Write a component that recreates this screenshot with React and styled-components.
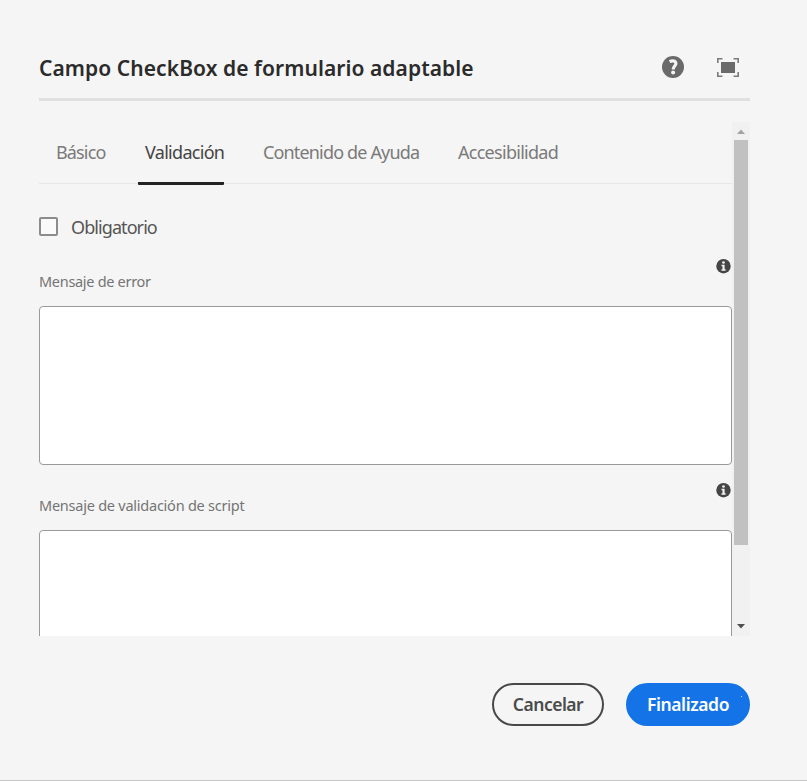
import React from 'react';
import styled, { createGlobalStyle } from 'styled-components';

const GlobalStyle = createGlobalStyle`
  * { box-sizing: border-box; }
  body { margin: 0; background: #f5f5f5; font-family: "Noto Sans", "Open Sans", sans-serif; }
`;

const Dialog = styled.main`
  display: flex;
  flex-direction: column;
  width: 807px;
  height: 781px;
  padding: 36px 57px 0 39px;
  background: #f5f5f5;
  border-bottom: 1px solid #c6c6c6;
  overflow: hidden;
`;

const Header = styled.header`
  display: flex;
  align-items: center;
  height: 65px;
  flex: none;
  border-bottom: 3px solid #e0e0e0;
`;

const Title = styled.h1`
  margin: 0 auto 0 0;
  padding-top: 2px;
  font-size: 21px;
  font-weight: 600;
  line-height: 30px;
  letter-spacing: ${(p) => p.$spacing}px;
  color: #2b2b2b;
  white-space: nowrap;
`;

const IconButton = styled.button`
  display: flex;
  padding: 0;
  border: 0;
  background: none;
  margin: ${(p) => p.$top}px ${(p) => p.$gap}px 0 0;
`;

const ScrollArea = styled.section`
  display: flex;
  flex: none;
  height: 514px;
  margin-top: 21px;
  overflow: hidden;
`;

const Content = styled.div`
  width: 693px;
  height: 514px;
  overflow: hidden;
`;

const Scrollbar = styled.div`
  display: flex;
  flex-direction: column;
  align-items: center;
  width: 18px;
  background: #f1f1f1;
`;

const Arrow = styled.svg`
  display: block;
  flex: none;
  width: 18px;
  height: 18px;
  margin-top: ${(p) => (p.$end ? 'auto' : 0)};
`;

const Thumb = styled.div`
  width: 14px;
  height: 405px;
  background: #c1c1c1;
`;

const Tabs = styled.nav`
  display: flex;
  height: 62px;
  border-bottom: 1px solid #e7e7e7;
`;

const Tab = styled.button`
  width: ${(p) => p.$width}px;
  height: 63px;
  margin-left: ${(p) => p.$offset}px;
  padding: 1px 0 0 ${(p) => p.$inset || 0}px;
  border: 0;
  border-bottom: 3px solid ${(p) => (p.$active ? '#222' : 'transparent')};
  border-radius: 1px;
  background: none;
  font: 400 18px/59px "Noto Sans", sans-serif;
  letter-spacing: ${(p) => p.$spacing}px;
  color: ${(p) => (p.$active ? '#444' : '#7a7a7a')};
  text-align: left;
  white-space: nowrap;
`;

const CheckRow = styled.label`
  display: flex;
  align-items: center;
  gap: 13px;
  height: 20px;
  margin-top: 33px;
`;

const CheckBox = styled.span`
  width: 19px;
  height: 19px;
  margin-bottom: 1px;
  border: 2px solid #8c8c8c;
  border-radius: 2px;
  background: #fafafa;
`;

const CheckText = styled.span`
  font-size: 18px;
  line-height: 20px;
  letter-spacing: -0.92px;
  color: #555;
`;

const Field = styled.div`
  height: 206px;
  margin-top: ${(p) => p.$gap}px;
`;

const FieldHead = styled.div`
  display: flex;
  justify-content: space-between;
  height: 47px;
`;

const FieldLabel = styled.span`
  margin-top: 12px;
  font-size: 14.5px;
  line-height: 20px;
  letter-spacing: ${(p) => p.$spacing}px;
  color: #747474;
`;

const TextArea = styled.div`
  height: 159px;
  border: 1px solid #999;
  border-radius: 4px;
  background: #fff;
`;

const Footer = styled.footer`
  display: flex;
  justify-content: flex-end;
  gap: 22px;
  margin-top: 47px;
`;

const Button = styled.button`
  position: relative;
  width: ${(p) => p.$width}px;
  height: 43px;
  padding: 0;
  border: 2px solid ${(p) => (p.$primary ? '#1473e6' : '#484848')};
  border-radius: 22px;
  background: ${(p) => (p.$primary ? '#1473e6' : 'transparent')};
  font: 600 17.5px/37px "Noto Sans", sans-serif;
  letter-spacing: ${(p) => p.$spacing}px;
  color: ${(p) => (p.$primary ? '#fff' : '#4b4b4b')};
`;

const Speck = styled.i`
  position: absolute;
  top: 11px;
  right: 6px;
  width: 1px;
  height: 1px;
  background: #b8d5f8;
`;

const InfoSvg = styled.svg`
  display: block;
  margin: 0 1px 0 0;
`;

function HelpIcon() {
  return (
    <svg width="22" height="22" viewBox="0 0 22 22">
      <circle cx="11" cy="11" r="11" fill="#6a6a6a" />
      <path d="M7.6 5.6C10.6 4.1 13.9 4.9 13.9 7.6C13.9 9.9 11.2 10.4 11.2 13.4" fill="none" stroke="#f5f5f5" strokeWidth="3.1" />
      <circle cx="11.1" cy="16.6" r="2" fill="#f5f5f5" />
    </svg>
  );
}

function FullscreenIcon() {
  return (
    <svg width="22" height="19" viewBox="0 0 22 19">
      <rect x="4" y="4" width="14" height="11" fill="#6a6a6a" />
      <path d="M.8 5V.8H5.5M16.5.8H21.2V5M21.2 14V18.2H16.5M5.5 18.2H.8V14" fill="none" stroke="#7c7c7c" strokeWidth="1.6" />
    </svg>
  );
}

function InfoIcon() {
  return (
    <InfoSvg width="15" height="15" viewBox="0 0 15 15">
      <circle cx="7.5" cy="7.2" r="7.2" fill="#464646" />
      <circle cx="7.5" cy="3.5" r="1.35" fill="#f5f5f5" />
      <path d="M5.5 5.8H8.6V10.3H9.6V11.7H5.5V10.3H6.5V7.2H5.5Z" fill="#f5f5f5" />
    </InfoSvg>
  );
}

function MessageField({ label, spacing, gap }) {
  return (
    <Field $gap={gap}>
      <FieldHead>
        <FieldLabel $spacing={spacing}>{label}</FieldLabel>
        <InfoIcon />
      </FieldHead>
      <TextArea />
    </Field>
  );
}

export default function App() {
  return (
    <>
      <GlobalStyle />
      <Dialog>
        <Header>
          <Title $spacing={0.07}>Campo CheckBox de formulario adaptable</Title>
          <IconButton $gap={33} $top={0}><HelpIcon /></IconButton>
          <IconButton $gap={11} $top={1}><FullscreenIcon /></IconButton>
        </Header>
        <ScrollArea>
          <Content>
            <Tabs>
              <Tab $width={50} $offset={17} $spacing={-0.85}>Básico</Tab>
              <Tab $width={86} $offset={32} $inset={7} $spacing={-0.7} $active>Validación</Tab>
              <Tab $width={157} $offset={39} $spacing={-0.84}>Contenido de Ayuda</Tab>
              <Tab $width={101} $offset={38} $spacing={-0.72}>Accesibilidad</Tab>
            </Tabs>
            <CheckRow>
              <CheckBox />
              <CheckText>Obligatorio</CheckText>
            </CheckRow>
            <MessageField label="Mensaje de error" spacing={-0.3} gap={22} />
            <MessageField label="Mensaje de validación de script" spacing={-0.24} gap={18} />
          </Content>
          <Scrollbar>
            <Arrow viewBox="0 0 18 18"><path d="M5 12L9 7.5L13 12Z" fill="#a3a3a3" /></Arrow>
            <Thumb />
            <Arrow $end viewBox="0 0 18 18"><path d="M5 6L9 10.5L13 6Z" fill="#505050" /></Arrow>
          </Scrollbar>
        </ScrollArea>
        <Footer>
          <Button $width={112} $spacing={-0.5}>Cancelar</Button>
          <Button $width={124} $spacing={-0.4} $primary>Finalizado<Speck /></Button>
        </Footer>
      </Dialog>
    </>
  );
}
